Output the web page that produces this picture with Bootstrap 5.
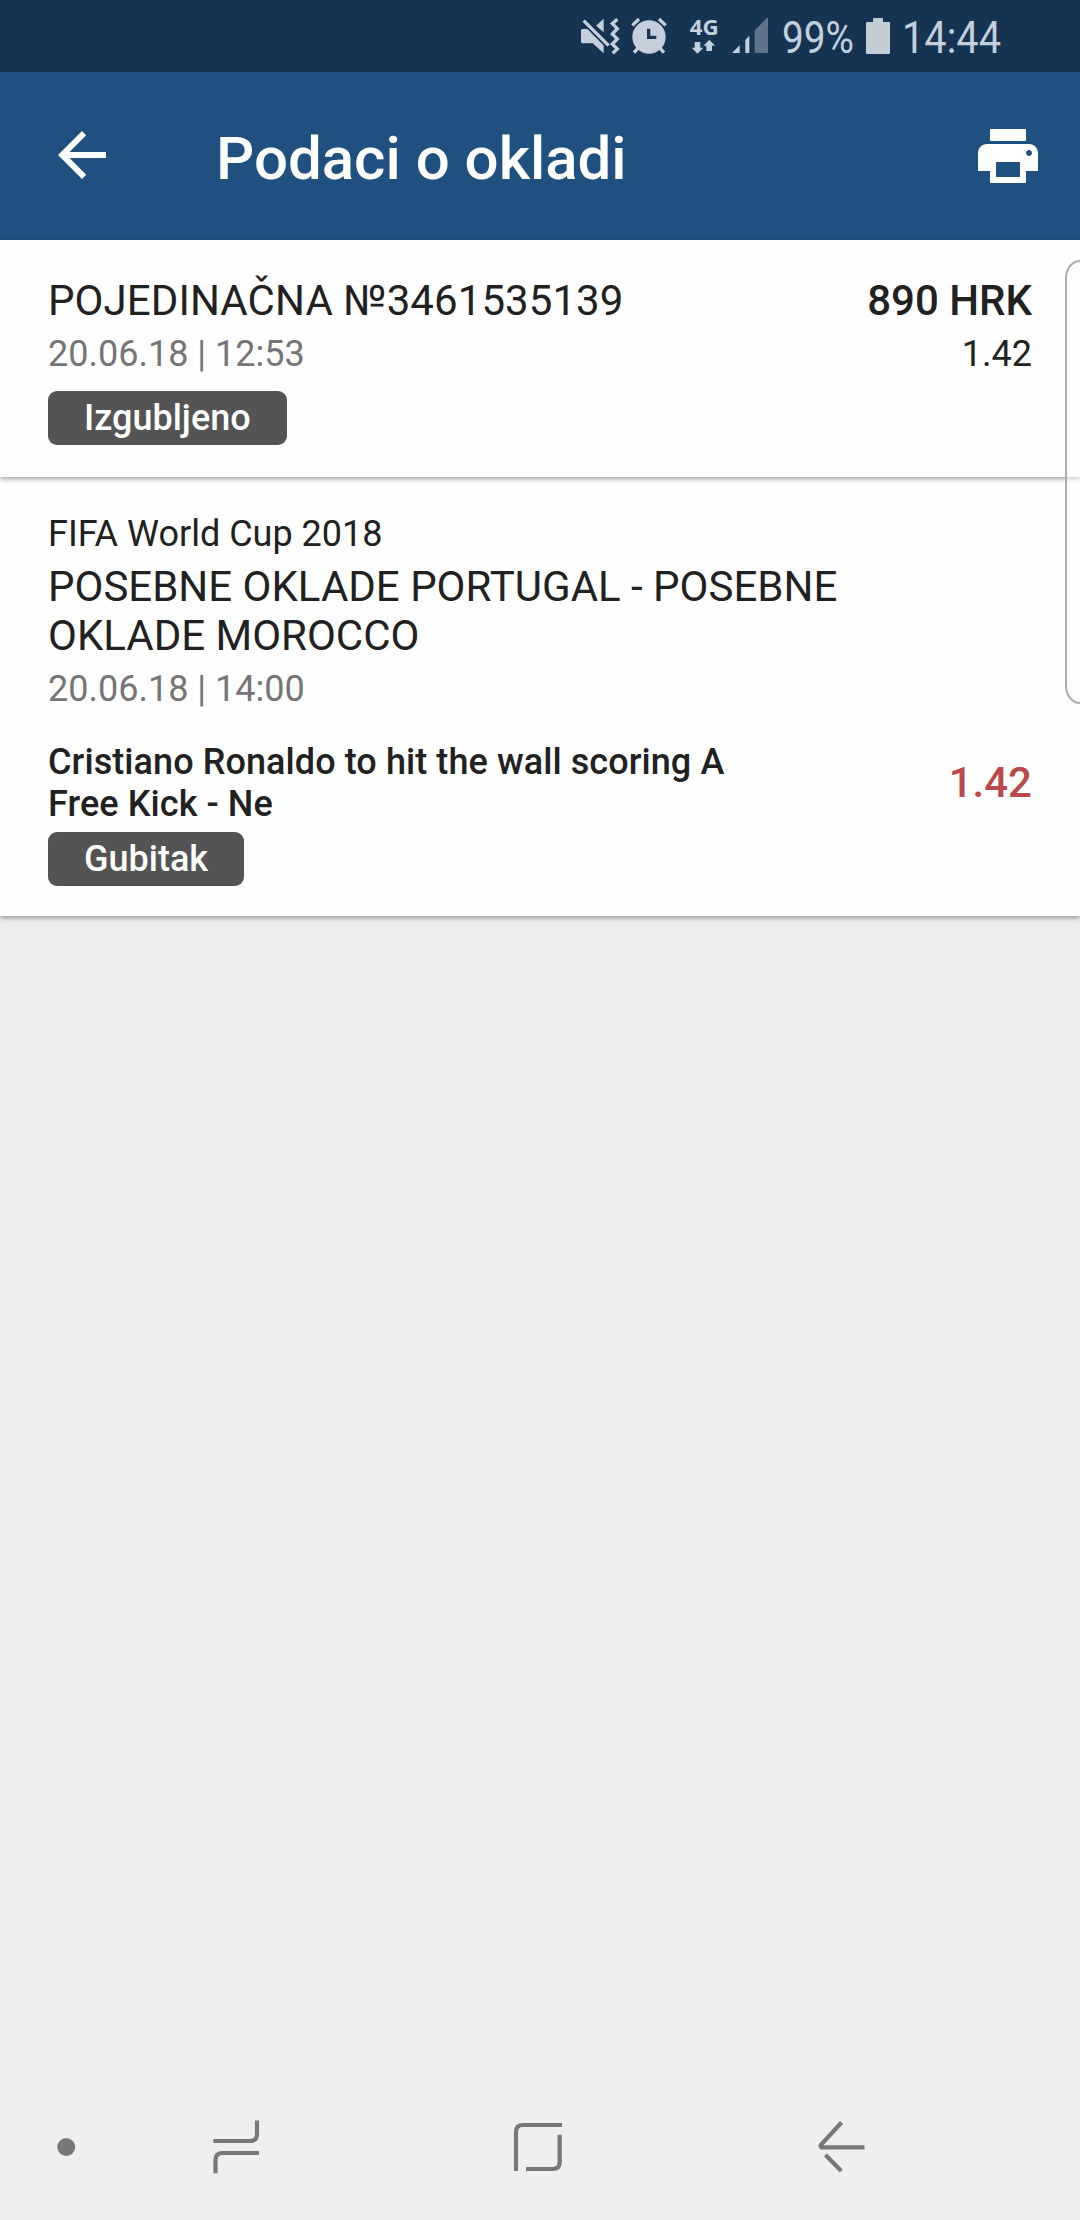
<!DOCTYPE html>
<html lang="hr">
<head>
<meta charset="utf-8">
<meta name="viewport" content="width=device-width, initial-scale=1">
<title>Podaci o okladi</title>
<link href="https://cdn.jsdelivr.net/npm/bootstrap@5.3.0/dist/css/bootstrap.min.css" rel="stylesheet">
<style>
  body { font-family: Roboto, "Noto Sans", sans-serif; background: #ededed; color: #212121; }
  .screen { width: 1080px; height: 2220px; }
  svg { display: block; flex: none; overflow: visible; }
  .status-bar { height: 72px; background: #163352; padding-left: 580px; }
  .status-bar svg { fill: #c3cfdb; }
  .sp-10 { margin-left: 10px; }
  .sp-11 { margin-left: 11px; }
  .sp-13 { margin-left: 13px; }
  .sp-21 { margin-left: 21px; }
  .app-bar { height: 168px; background: #20507f; padding: 0 36px 0 46px; }
  .app-title { font-size: 60px; line-height: 70px; font-weight: 500; margin: 6px 0 0 98px; }
  .app-bar svg { fill: #fff; margin-top: -2px; }
  .app-bar .print-icon { margin-top: 0; }
  .panel { position: relative; background: #fefefe; padding: 36px 48px 0; box-shadow: 0 2px 5px rgba(0,0,0,.36); }
  .panel-ticket { height: 237px; z-index: 1; }
  .panel-event { height: 439px; }
  .t-lg { font-size: 42px; line-height: 49px; }
  .t-md { font-size: 36px; line-height: 42px; }
  .semi { font-weight: 500; }
  .ticket-no { letter-spacing: .08px; }
  .pick-name { letter-spacing: .08px; }
  .muted { color: #757575; }
  .odds-lost { color: #b9494a; margin-top: -1px; }
  .state-tag { font-size: 36px; line-height: 42px; font-weight: 500; padding: 6px 36px; border-radius: 9px; background: #545454; color: #fff; }
  .gap-s { margin-top: 8px; }
  .gap-xs { margin-top: 7px; }
  .gap-m { margin-top: 16px; }
  .gap-l { margin-top: 31px; }
  .edge-handle { position: absolute; z-index: 2; top: 260px; right: 0; width: 15px; height: 444px; border: 2px solid #adadad; border-right: 0; border-radius: 20px 0 0 20px / 24px 0 0 24px; background: rgba(255,255,255,.45); }
  .nav-keys { height: 145px; background: #efefef; padding-left: 57px; }
  .nav-keys svg { fill: none; stroke: #787878; stroke-width: 4.2; }
  .key-recents { margin-left: 138px; }
  .key-home { margin-left: 255px; }
  .key-back { margin-left: 256px; }
</style>
</head>
<body>
<div class="screen d-flex flex-column position-relative overflow-hidden">
  <header>
    <div class="status-bar d-flex">
      <svg width="40" height="72" viewBox="60 0 120 216">
        <path d="M63 91q0-4 4-4h20L104 100 131 127V160L98 130H67q-4 0-4-4zM131 56V97L108 77z"/>
        <path d="M71 62L146 137" fill="none" stroke="#163352" stroke-width="20"/>
        <path d="M71 62L146 137" fill="none" stroke="#c3cfdb" stroke-width="10"/>
        <path d="M173 58L158 71 173 86 158 102 173 117 158 132 173 147 159 160" transform="translate(-1 0)" fill="none" stroke="#c3cfdb" stroke-width="10"/>
      </svg>
      <svg class="sp-10" width="38" height="72" viewBox="210 0 114 216">
        <circle cx="267" cy="111" r="50"/>
        <path d="M217 76L237 57M317 76L297 57M236 142L222 158M298 142L312 158" fill="none" stroke="#c3cfdb" stroke-width="10"/>
        <path d="M266 86V112H289" fill="none" stroke="#163352" stroke-width="10"/>
      </svg>
      <svg class="sp-21" width="30" height="72" viewBox="689 0 30 72">
        <text x="689.700" y="34.700" font-family="Noto Sans, sans-serif" font-weight="700" font-size="22" textLength="29" lengthAdjust="spacingAndGlyphs">4G</text>
        <path transform="translate(560 0) scale(.33333)" d="M404 126h17v17h9L412.500 161 395 143h9zM439 153V137h-9L448 119 465 137h-9v16z"/>
      </svg>
      <svg class="sp-13" width="38" height="72" viewBox="516 0 114 216">
        <path d="M516 159L539 136V159zM556 159V120L568 107V159z"/>
        <path d="M584 159V91L624 51V159z" fill="#60728a"/>
      </svg>
      <svg class="sp-13" width="72" height="72" viewBox="783 0 72 72">
        <text x="782" y="53" font-size="45" textLength="72" lengthAdjust="spacingAndGlyphs">99%</text>
      </svg>
      <svg class="sp-11" width="24" height="72" viewBox="866 0 24 72">
        <path d="M867 22h6v-3q0-1 1-1h8q1 0 1 1v3h6q1 0 1 1v30q0 1-1 1h-22q-1 0-1-1V23q0-1 1-1z" fill="#c3cdd4"/>
      </svg>
      <svg class="sp-13" width="98" height="72" viewBox="903 0 98 72">
        <text x="902" y="53" font-size="45" textLength="99" lengthAdjust="spacingAndGlyphs">14:44</text>
      </svg>
    </div>
    <div class="app-bar d-flex align-items-center text-white">
      <svg width="72" height="72" viewBox="0 0 24 24"><path d="M20 11H7.830l5.590-5.590L12 4l-8 8 8 8 1.410-1.410L7.830 13H20z"/></svg>
      <h1 class="app-title">Podaci o okladi</h1>
      <svg class="print-icon ms-auto" width="72" height="72" viewBox="0 0 24 24"><path d="M19 8H5c-1.660 0-3 1.340-3 3v6h4v4h12v-4h4v-6c0-1.660-1.340-3-3-3zm-3 11H8v-5h8zm3-7c-.550 0-1-.450-1-1s.450-1 1-1 1 .450 1 1-.450 1-1 1zM18 3H6v4h12z"/></svg>
    </div>
  </header>

  <main class="flex-grow-1">
    <section class="panel panel-ticket">
      <div class="d-flex justify-content-between t-lg">
        <span class="ticket-no">POJEDINAČNA №3461535139</span>
        <span class="semi">890 HRK</span>
      </div>
      <div class="d-flex justify-content-between t-md gap-s">
        <span class="muted">20.06.18 | 12:53</span>
        <span>1.42</span>
      </div>
      <div class="d-flex gap-m"><span class="state-tag">Izgubljeno</span></div>
    </section>

    <section class="panel panel-event">
      <div class="t-md">FIFA World Cup 2018</div>
      <div class="t-lg gap-xs">POSEBNE OKLADE PORTUGAL - POSEBNE<br>OKLADE MOROCCO</div>
      <div class="t-md muted gap-s">20.06.18 | 14:00</div>
      <div class="d-flex justify-content-between align-items-center gap-l semi">
        <div class="t-md pick-name">Cristiano Ronaldo to hit the wall scoring A<br>Free Kick - Ne</div>
        <div class="t-lg odds-lost">1.42</div>
      </div>
      <div class="d-flex gap-xs"><span class="state-tag">Gubitak</span></div>
    </section>
  </main>

  <div class="edge-handle"></div>

  <footer class="nav-keys d-flex">
    <svg width="18" height="145" viewBox="57 2075 18 145"><circle cx="66.200" cy="2147" r="9" fill="#787878" stroke="none"/></svg>
    <svg class="key-recents" width="46" height="145" viewBox="213 2075 46 145"><path d="M213.300 2141H250q7 0 7-7V2120.500M259 2153H222.500q-7 0-7 7V2173.300"/></svg>
    <svg class="key-home" width="48" height="145" viewBox="514 2075 48 145"><path d="M516 2171V2132q0-7 7-7H562M559.700 2134.700V2162q0 7-7 7H526"/></svg>
    <svg class="key-back" width="48" height="145" viewBox="818 2075 48 145"><path d="M864.500 2147.300H821.500q-1.500-1-.5-2.500L841.500 2122.500M825.500 2155L841.300 2171"/></svg>
  </footer>
</div>
<script src="https://cdn.jsdelivr.net/npm/bootstrap@5.3.0/dist/js/bootstrap.bundle.min.js"></script>
</body>
</html>
